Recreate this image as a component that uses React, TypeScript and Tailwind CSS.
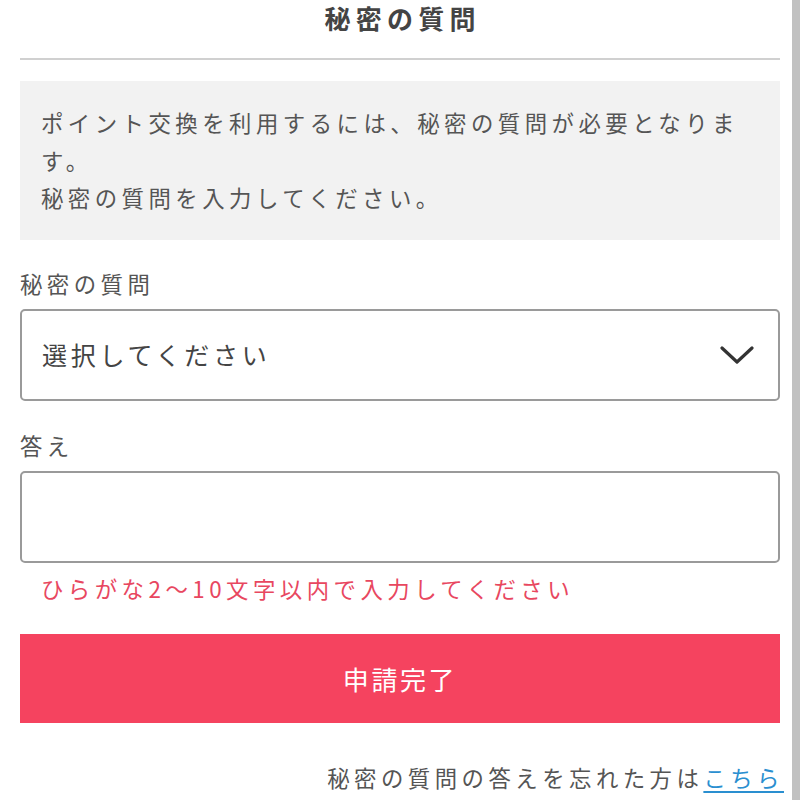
import React from "react";

const FONT = { fontFamily: '"Noto Sans CJK JP", "Noto Sans", sans-serif' };

export default function App() {
  return (
    <div className="relative w-[800px] h-[800px] overflow-hidden bg-white text-[#555]" style={FONT}>
      <div className="w-[800px] px-5">
        <div className="h-[60px] border-b-2 border-[#d0d0d0] flex justify-center">
          <h1 className="text-[26px] leading-[36px] font-bold tracking-[0.2em] text-[#444] pl-[0.2em]">秘密の質問</h1>
        </div>
        <div className="mt-[21px] bg-[#f2f2f2] px-[21px] py-[23px] text-[22.4px] leading-[37.5px] tracking-[0.2em]">
          <p>ポイント交換を利用するには、秘密の質問が必要となります。</p>
          <p>秘密の質問を入力してください。</p>
        </div>
        <div className="mt-[25px] text-[22.4px] leading-[37.5px] tracking-[0.2em]">秘密の質問</div>
        <div className="mt-[7px] h-[92px] border-2 border-[#9a9a9a] rounded-[5px] flex items-center justify-between pl-[20px] pr-[24px]">
          <span className="text-[25px] tracking-[0.15em] text-[#444]">選択してください</span>
          <svg width="34" height="20" viewBox="0 0 34 20" fill="none" stroke="#333" strokeWidth="3.2" strokeLinecap="round" strokeLinejoin="round">
            <path d="M2 3 L17 17 L32 3" />
          </svg>
        </div>
        <div className="mt-[26px] text-[22.4px] leading-[37.5px] tracking-[0.2em]">答え</div>
        <div className="mt-[6px] h-[92px] border-2 border-[#9a9a9a] rounded-[5px]" />
        <div className="mt-[7px] pl-[21px] text-[22.4px] leading-[37.5px] tracking-[0.2em] text-[#e8475f]">ひらがな2〜10文字以内で入力してください</div>
        <button className="mt-[27px] w-full h-[89px] bg-[#f5435f] text-white text-[26px] tracking-[0.1em] flex items-center justify-center">申請完了</button>
        <div className="mt-[36px] text-right text-[22.4px] leading-[37.5px] tracking-[0.2em] mr-[-4px]">
          秘密の質問の答えを忘れた方は<a className="text-[#2a8fd0] underline underline-offset-4">こちら</a>
        </div>
      </div>
      <div className="absolute top-0 right-0 w-[8px] h-full bg-[#c1c1c1]" />
    </div>
  );
}
